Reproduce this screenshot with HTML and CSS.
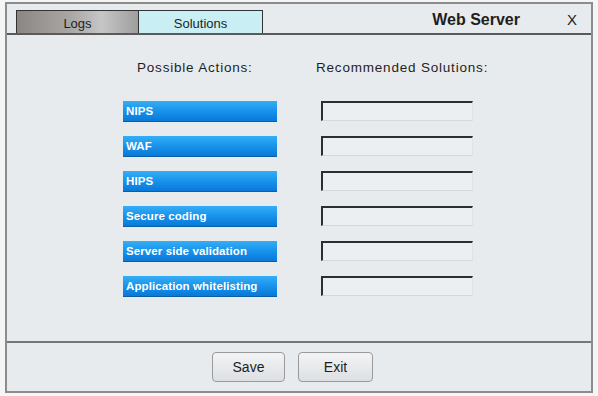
FILE: index.html
```html
<!DOCTYPE html>
<html lang="en">
<head>
  <meta charset="UTF-8" />
  <title>Web Server</title>
  <link rel="stylesheet" href="styles.css">
</head>
<body>
  <div class="window">
    <div class="titlebar">
      <div class="tabs">
        <div class="tab tab-logs">Logs</div>
        <div class="tab tab-active">Solutions</div>
      </div>
      <div class="title">Web Server</div>
      <div class="close">X</div>
    </div>

    <div class="content">
      <div class="grid">
        <div class="col-label label-left">Possible Actions:</div>
        <div class="col-label label-right">Recommended Solutions:</div>

        <div class="action">NIPS</div>
        <div class="slot"></div>
        <div class="action">WAF</div>
        <div class="slot"></div>
        <div class="action">HIPS</div>
        <div class="slot"></div>
        <div class="action">Secure coding</div>
        <div class="slot"></div>
        <div class="action">Server side validation</div>
        <div class="slot"></div>
        <div class="action">Application whitelisting</div>
        <div class="slot"></div>
      </div>
    </div>

    <div class="footer">
      <button class="btn btn-save">Save</button>
      <button class="btn">Exit</button>
    </div>
  </div>
</body>
</html>
```

FILE: styles.css
```css
* {
  margin: 0;
  padding: 0;
  box-sizing: border-box;
  font-family: 'Liberation Sans', Arial, sans-serif;
}
body {
  background: #f5f5f5;
  width: 598px;
  height: 396px;
  padding: 2px 5px 3px 5px;
}
.window {
  height: 391px;
  border: 2px solid #8c8c8c;
  background: #e8ebed;
  display: flex;
  flex-direction: column;
  color: #1e1e1e;
}
.titlebar {
  height: 31px;
  border-bottom: 2px solid #5a5a5a;
  display: flex;
  align-items: flex-end;
  padding-left: 9px;
}
.tabs {
  display: flex;
}
.tab {
  height: 23px;
  width: 124px;
  border: 1px solid #333;
  border-bottom: none;
  font-size: 13px;
  display: flex;
  align-items: center;
  justify-content: center;
  padding-top: 2px;
}
.tab-logs {
  width: 123px;
  background: linear-gradient(to right, #8a8683, #aaa8a6 45%, #c6c6c6 70%, #9e9e9e);
}
.tab-active {
  border-left: none;
  background: #c9eef3;
}
.title {
  margin-left: auto;
  font-size: 16px;
  font-weight: bold;
  align-self: flex-start;
  margin-top: 7px;
}
.close {
  font-size: 15px;
  align-self: flex-start;
  margin-top: 7px;
  margin-left: 47px;
  margin-right: 14px;
}
.content {
  flex: 1;
  padding: 25px 0 0 116px;
}
.grid {
  display: grid;
  grid-template-columns: 154px 152px;
  column-gap: 44px;
  row-gap: 15px;
}
.col-label {
  font-size: 13.5px;
  letter-spacing: 0.8px;
  height: 16px;
  line-height: 16px;
  margin-bottom: 10px;
  white-space: nowrap;
}
.label-left {
  padding-left: 14px;
}
.label-right {
  margin-left: -5px;
}
.action {
  height: 20px;
  background: linear-gradient(to bottom, #34aef5, #1690ea 55%, #0a78d6);
  color: #fff;
  font-size: 11.5px;
  font-weight: bold;
  letter-spacing: 0.1px;
  line-height: 20px;
  padding-left: 3px;
  white-space: nowrap;
  box-shadow: 0 1px 0 #0a5fa8;
}
.slot {
  height: 20px;
  border-top: 2px solid #2e2e2e;
  border-left: 2px solid #2e2e2e;
  border-right: 1px solid #e0e3e5;
  border-bottom: 1px solid #d5d8da;
  background: #eceff1;
}
.footer {
  height: 50px;
  border-top: 2px solid #777;
  display: flex;
  align-items: center;
  justify-content: center;
  gap: 13px;
  padding-right: 13px;
}
.btn {
  width: 73px;
  height: 30px;
  border: 1px solid #9a9a9a;
  border-radius: 4px;
  background: linear-gradient(to bottom, #f3f4f5, #dcdfe2);
  font-size: 14px;
  color: #1e1e1e;
}
.btn + .btn {
  width: 75px;
}
```
